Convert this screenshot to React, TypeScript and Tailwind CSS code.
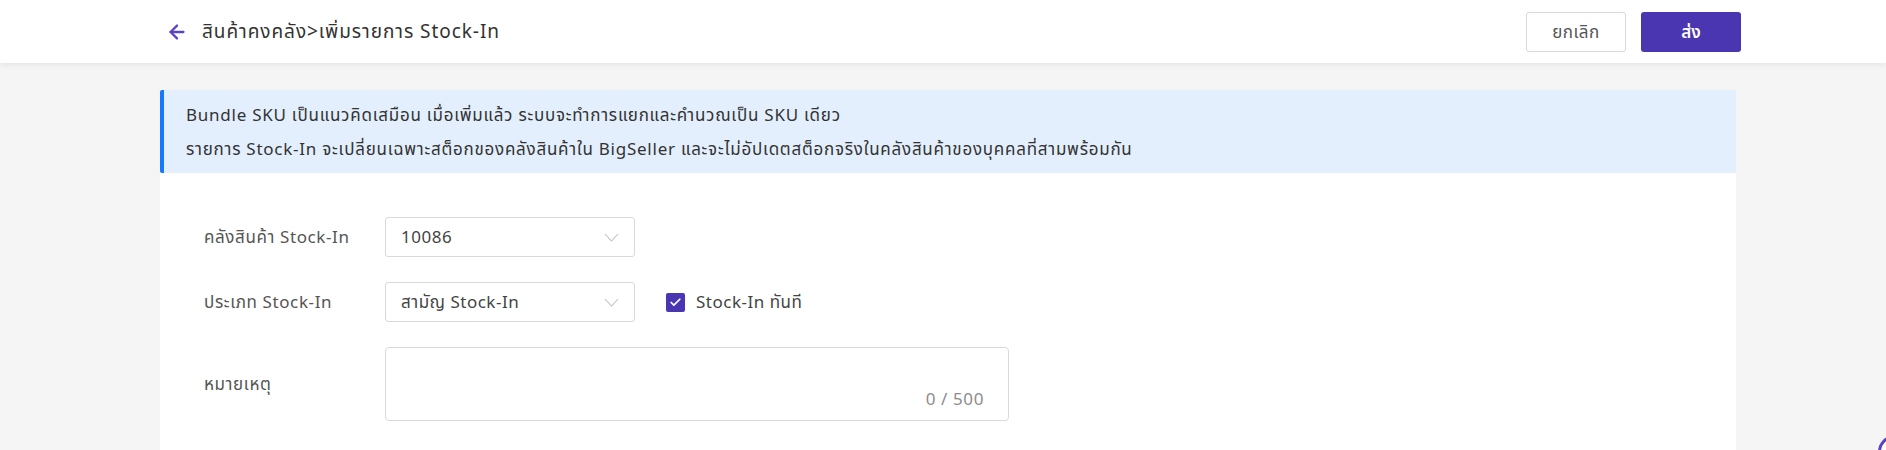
import { ArrowLeft, Check } from "lucide-react";

const font = { fontFamily: '"Noto Sans", "Noto Sans Thai", "Liberation Sans", sans-serif' };

function Chevron() {
  return (
    <svg width="15" height="9" viewBox="0 0 15 9" fill="none">
      <polyline points="1,1 7.5,8 14,1" stroke="#bfbfbf" strokeWidth="1.1" />
    </svg>
  );
}

function Select({ value }: { value: string }) {
  return (
    <div className="flex h-[40px] w-[250px] items-center justify-between rounded-[3px] border border-[#d9d9d9] bg-white pl-[15px] pr-[15px]">
      <span className="text-[17px] tracking-[0.5px] text-[#444]">{value}</span>
      <Chevron />
    </div>
  );
}

function Row({ label, children }: { label: string; children: React.ReactNode }) {
  return (
    <div className="flex items-center">
      <div className="w-[181px] shrink-0 text-[17px] tracking-[0.6px] text-[#555]">{label}</div>
      {children}
    </div>
  );
}

export default function App() {
  return (
    <div className="relative h-[450px] overflow-hidden bg-[#f5f5f5]" style={font}>
      <header className="relative z-10 h-[63px] bg-white shadow-[0_2px_6px_rgba(0,0,0,0.07)]">
        <div className="ml-[166px] flex h-full w-[1575px] items-center justify-between">
          <div className="flex items-center gap-[14px]">
            <ArrowLeft className="h-[22px] w-[22px] text-[#5b43c4]" strokeWidth={2.5} />
            <span className="text-[19px] tracking-[0.95px] text-[#333]">สินค้าคงคลัง&gt;เพิ่มรายการ Stock-In</span>
          </div>
          <div className="flex items-center gap-[15px]">
            <button className="h-[40px] w-[100px] rounded-[3px] border border-[#d9d9d9] bg-white text-[17px] tracking-[0.5px] text-[#555]">
              ยกเลิก
            </button>
            <button className="h-[40px] w-[100px] rounded-[3px] bg-[#4a36b1] text-[17px] font-semibold text-white">
              ส่ง
            </button>
          </div>
        </div>
      </header>

      <main className="ml-[160px] w-[1576px] pt-[27px]">
        <div className="flex h-[83px] flex-col justify-center gap-[9px] rounded-l-[2px] border-l-[4px] border-[#1677ff] bg-[#e3effd] pl-[22px] text-[17px] tracking-[0.75px] text-[#333]">
          <p>Bundle SKU เป็นแนวคิดเสมือน เมื่อเพิ่มแล้ว ระบบจะทำการแยกและคำนวณเป็น SKU เดียว</p>
          <p>รายการ Stock-In จะเปลี่ยนเฉพาะสต็อกของคลังสินค้าใน BigSeller และจะไม่อัปเดตสต็อกจริงในคลังสินค้าของบุคคลที่สามพร้อมกัน</p>
        </div>

        <div className="flex h-[300px] flex-col gap-[25px] bg-white pl-[44px] pt-[44px]">
          <Row label="คลังสินค้า Stock-In">
            <Select value="10086" />
          </Row>
          <Row label="ประเภท Stock-In">
            <Select value="สามัญ Stock-In" />
            <label className="ml-[31px] flex items-center gap-[11px]">
              <span className="flex h-[19px] w-[19px] items-center justify-center rounded-[2px] bg-[#4a36b1]">
                <Check className="h-[13px] w-[13px] text-white" strokeWidth={3.2} />
              </span>
              <span className="text-[17px] tracking-[0.5px] text-[#444]">Stock-In ทันที</span>
            </label>
          </Row>
          <Row label="หมายเหตุ">
            <div className="flex h-[74px] w-[624px] items-end justify-end rounded-[4px] border border-[#d9d9d9] bg-white pb-[9px] pr-[24px]">
              <span className="text-[17px] tracking-[0.6px] text-[#8c8c8c]">0 / 500</span>
            </div>
          </Row>
        </div>
      </main>

      <div className="absolute left-[1878px] top-[435px] h-[34px] w-[34px] rounded-full border-[3px] border-[#5b43c4] bg-white" />
    </div>
  );
}
